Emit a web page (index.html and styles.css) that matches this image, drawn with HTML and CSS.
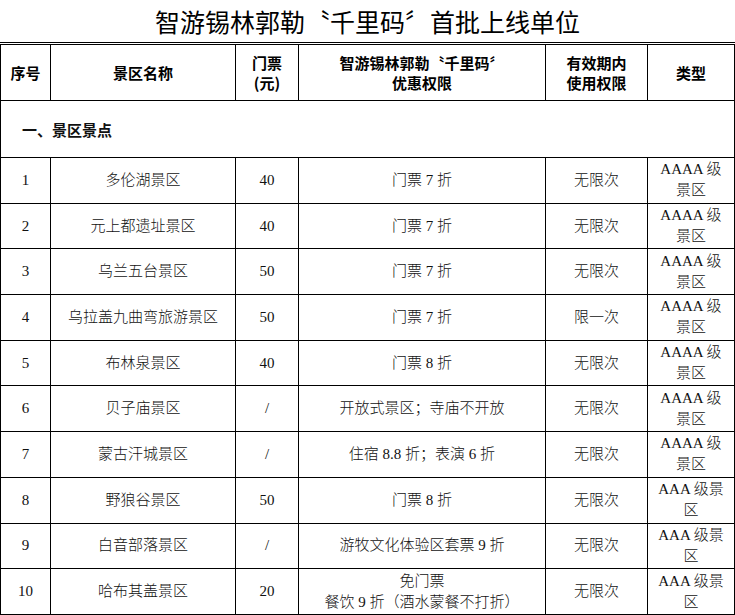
FILE: index.html
```html
<!DOCTYPE html>
<html lang="zh">
<head>
<meta charset="utf-8">
<title>智游锡林郭勒〝千里码〞首批上线单位</title>
<link rel="stylesheet" href="styles.css">
</head>
<body>
<h1 class="title">智游锡林郭勒〝千里码〞首批上线单位</h1>
<table class="list">
  <colgroup>
    <col class="c-no"><col class="c-name"><col class="c-price"><col class="c-offer"><col class="c-use"><col class="c-type">
  </colgroup>
  <thead>
    <tr class="head">
      <th>序号</th>
      <th>景区名称</th>
      <th>门票<br>(元)</th>
      <th>智游锡林郭勒〝千里码〞<br>优惠权限</th>
      <th>有效期内<br>使用权限</th>
      <th>类型</th>
    </tr>
  </thead>
  <tbody>
    <tr class="section"><td colspan="6">一、景区景点</td></tr>
    <tr><td>1</td><td>多伦湖景区</td><td>40</td><td>门票 7 折</td><td>无限次</td><td>AAAA 级<br>景区</td></tr>
    <tr><td>2</td><td>元上都遗址景区</td><td>40</td><td>门票 7 折</td><td>无限次</td><td>AAAA 级<br>景区</td></tr>
    <tr><td>3</td><td>乌兰五台景区</td><td>50</td><td>门票 7 折</td><td>无限次</td><td>AAAA 级<br>景区</td></tr>
    <tr><td>4</td><td>乌拉盖九曲弯旅游景区</td><td>50</td><td>门票 7 折</td><td>限一次</td><td>AAAA 级<br>景区</td></tr>
    <tr><td>5</td><td>布林泉景区</td><td>40</td><td>门票 8 折</td><td>无限次</td><td>AAAA 级<br>景区</td></tr>
    <tr><td>6</td><td>贝子庙景区</td><td>/</td><td>开放式景区；寺庙不开放</td><td>无限次</td><td>AAAA 级<br>景区</td></tr>
    <tr><td>7</td><td>蒙古汗城景区</td><td>/</td><td>住宿 8.8 折；表演 6 折</td><td>无限次</td><td>AAAA 级<br>景区</td></tr>
    <tr><td>8</td><td>野狼谷景区</td><td>50</td><td>门票 8 折</td><td>无限次</td><td>AAA 级景<br>区</td></tr>
    <tr><td>9</td><td>白音部落景区</td><td>/</td><td>游牧文化体验区套票 9 折</td><td>无限次</td><td>AAA 级景<br>区</td></tr>
    <tr><td>10</td><td>哈布其盖景区</td><td>20</td><td>免门票<br>餐饮 9 折（酒水蒙餐不打折）</td><td>无限次</td><td>AAA 级景<br>区</td></tr>
  </tbody>
</table>
</body>
</html>
```

FILE: styles.css
```css
html, body {
  margin: 0;
  padding: 0;
  background: #fff;
}

body {
  width: 735px;
  overflow: hidden;
  color: #000;
}

.title {
  margin: 0;
  height: 43px;
  box-sizing: border-box;
  padding-top: 5px;
  border-bottom: 1px solid #000;
  text-align: center;
  font-family: "Noto Sans CJK SC", sans-serif;
  font-size: 25px;
  font-weight: 400;
  line-height: 32px;
  letter-spacing: 0;
}

.list {
  margin-top: 1px;
  border-collapse: collapse;
  table-layout: fixed;
  width: 734px;
  border: 1px solid #000;
}

.c-no { width: 50px; }
.c-name { width: 185px; }
.c-price { width: 63px; }
.c-offer { width: 247px; }
.c-use { width: 102px; }
.c-type { width: 87px; }

.list th,
.list td {
  border: 1px solid #000;
  padding: 0 4px;
  text-align: center;
  vertical-align: middle;
}

.head th {
  height: 55px;
  font-family: "Noto Sans CJK SC", sans-serif;
  font-size: 15px;
  font-weight: 700;
  line-height: 20px;
}

.section td {
  height: 56px;
  text-align: left;
  padding-left: 21px;
  font-family: "Noto Sans CJK SC", sans-serif;
  font-size: 15px;
  font-weight: 700;
}

tbody tr td {
  height: 44.7px;
  font-family: "Liberation Serif", "Noto Sans CJK SC", serif;
  font-size: 15px;
  font-weight: 300;
  line-height: 21px;
  color: #111;
}
```
